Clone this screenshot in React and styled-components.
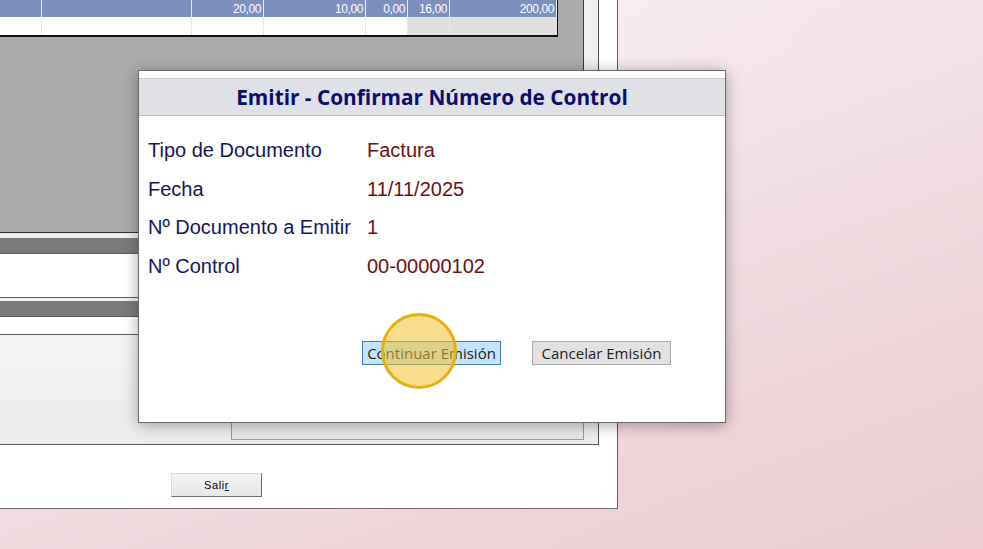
import React from 'react'
import styled, { createGlobalStyle } from 'styled-components'

const GlobalStyle = createGlobalStyle`
  html, body {
    margin: 0;
    padding: 0;
  }
  body {
    font-family: "Liberation Sans", Arial, sans-serif;
  }
`

const Desktop = styled.div`
  position: relative;
  width: 983px;
  height: 549px;
  overflow: hidden;
  background:
    radial-gradient(ellipse 900px 520px at 20% 0%, rgba(255, 255, 255, 0.55), rgba(255, 255, 255, 0) 70%),
    linear-gradient(160deg, #f8eff1 0%, #f3e2e6 45%, #eed5da 75%, #ebcdd3 100%);
`

const AppWindow = styled.div`
  box-sizing: border-box;
  width: 618px;
  height: 509px;
  background: #fff;
  border-right: 1px solid #5c5c5c;
  border-bottom: 1px solid #6a6a6a;
  padding-right: 18px;
  display: flex;
  flex-direction: column;
`

const MainPanel = styled.div`
  box-sizing: border-box;
  width: 599px;
  height: 445px;
  border-right: 1px solid #4a4a4a;
  border-bottom: 1px solid #555;
  display: flex;
  flex-direction: column;
`

const TopArea = styled.div`
  height: 232px;
  display: flex;
  border-bottom: 1px solid #2e2e2e;
`

const GrayArea = styled.div`
  width: 583px;
  background: #ababab;
`

const ScrollStrip = styled.div`
  flex: 1;
  background: #f0f0f0;
  border-left: 1px solid #3a3a3a;
`

const Grid = styled.div`
  display: grid;
  grid-template-columns: 42px 150px 72px 102px 42px 42px 107px;
  width: 558px;
  box-sizing: border-box;
  border-right: 1px solid #111;
  border-bottom: 2px solid #111;
`

const Cell = styled.div`
  box-sizing: border-box;
  height: ${p => (p.$head ? 17 : 18)}px;
  padding-right: 2px;
  text-align: right;
  font-family: "Liberation Sans Narrow", "Liberation Sans", Arial, sans-serif;
  font-size: 12px;
  line-height: 18px;
  letter-spacing: -0.4px;
  color: #fff;
  background: ${p => (p.$head ? '#7d8fbd' : p.$shade ? '#e0e0e0' : '#fff')};
  border-right: 1px solid ${p => (p.$head ? '#e9edf6' : '#e6e6e6')};
  &:last-child {
    border-right: none;
  }
`

const Lower = styled.div`
  flex: 1;
  display: flex;
  flex-direction: column;
  background: #f0f0f0;
  padding-top: 5px;
`

const Bar = styled.div`
  height: 15px;
  background: #7b7b7b;
  border-bottom: 1px solid #5a5a5a;
`

const WhiteBlock = styled.div`
  height: ${p => p.$h}px;
  background: #fff;
  border-bottom: 1px solid #5a5a5a;
  margin-bottom: ${p => p.$gap || 0}px;
`

const GroupArea = styled.div`
  flex: 1;
  display: flex;
  flex-direction: column;
  justify-content: flex-end;
  padding: 0 0 4px 231px;
  background: linear-gradient(180deg, #f4f4f4 0%, #ececec 100%);
`

const GroupBox = styled.div`
  box-sizing: border-box;
  width: 353px;
  height: 60px;
  border: 1px solid #9a9a9a;
  display: flex;
  justify-content: flex-end;
  padding: 22px 8px 0 0;
  font-size: 11px;
  color: #9c9c9c;
  background: linear-gradient(180deg, #f3f3f3 0%, #e6e6e6 100%);
`

const Footer = styled.div`
  padding: 28px 0 0 171px;
`

const SalirButton = styled.button`
  box-sizing: border-box;
  width: 91px;
  height: 24px;
  background: linear-gradient(180deg, #f5f5f5 0%, #e7e7e7 100%);
  border: 1px solid #d8d8d8;
  border-right-color: #6e6e6e;
  border-bottom-color: #6e6e6e;
  font-family: "Liberation Sans Narrow", "Liberation Sans", Arial, sans-serif;
  font-size: 11px;
  letter-spacing: 0.6px;
  color: #000;
  padding: 0;
  u {
    text-decoration: underline;
  }
`

const Dialog = styled.div`
  position: absolute;
  left: 138px;
  top: 70px;
  box-sizing: border-box;
  width: 588px;
  height: 353px;
  background: #fff;
  border: 1px solid #6b6b6b;
  box-shadow: 0 2px 14px rgba(0, 0, 0, 0.35);
  padding-top: 7px;
  display: flex;
  flex-direction: column;
`

const TitleBar = styled.div`
  height: 36px;
  background: #dfe1e7;
  border-top: 1px solid #c9ccd2;
  border-bottom: 1px solid #b7bac2;
  display: flex;
  align-items: center;
  justify-content: center;
  font-family: "Open Sans", "DejaVu Sans", sans-serif;
  font-weight: 700;
  font-size: 20.8px;
  color: #0c0c6b;
`

const Fields = styled.div`
  display: grid;
  grid-template-columns: 219px 1fr;
  grid-auto-rows: 38.7px;
  align-items: center;
  padding: 15px 0 0 9px;
  font-family: "Liberation Sans", Arial, sans-serif;
  font-size: 20px;
`

const Label = styled.div`
  color: #15155c;
`

const Value = styled.div`
  color: #6b1111;
`

const Actions = styled.div`
  display: flex;
  gap: 31px;
  padding: 55px 0 0 223px;
`

const DialogButton = styled.button`
  box-sizing: border-box;
  width: 139px;
  height: 24px;
  padding: 0;
  font-family: "Open Sans", "Noto Sans", sans-serif;
  font-size: 15px;
  line-height: 22px;
  color: #1b1b1b;
  background: ${p => (p.$primary ? '#c3e4fa' : '#e1e1e1')};
  border: 1px solid ${p => (p.$primary ? '#3d80b5' : '#a9a9a9')};
`

const ClickMark = styled.div`
  position: absolute;
  left: 381px;
  top: 313px;
  width: 76px;
  height: 76px;
  box-sizing: border-box;
  border-radius: 50%;
  border: 3px solid #e5b10c;
  background: rgba(240, 193, 45, 0.55);
  pointer-events: none;
`

const headValues = ['', '', '20,00', '10,00', '0,00', '16,00', '200,00']
const fields = [
  ['Tipo de Documento', 'Factura'],
  ['Fecha', '11/11/2025'],
  ['Nº Documento a Emitir', '1'],
  ['Nº Control', '00-00000102'],
]

export default function App() {
  return (
    <>
      <GlobalStyle />
      <Desktop>
        <AppWindow>
          <MainPanel>
            <TopArea>
              <GrayArea>
                <Grid>
                  {headValues.map((v, i) => (
                    <Cell key={'h' + i} $head>{v}</Cell>
                  ))}
                  {headValues.map((v, i) => (
                    <Cell key={'r' + i} $shade={i >= 5} />
                  ))}
                </Grid>
              </GrayArea>
              <ScrollStrip />
            </TopArea>
            <Lower>
              <Bar />
              <WhiteBlock $h={43} $gap={3} />
              <Bar />
              <WhiteBlock $h={17} />
              <GroupArea>
                <GroupBox>Ensayos</GroupBox>
              </GroupArea>
            </Lower>
          </MainPanel>
          <Footer>
            <SalirButton>Sali<u>r</u></SalirButton>
          </Footer>
        </AppWindow>

        <Dialog>
          <TitleBar>Emitir - Confirmar Número de Control</TitleBar>
          <Fields>
            {fields.map(([l, v]) => (
              <React.Fragment key={l}>
                <Label>{l}</Label>
                <Value>{v}</Value>
              </React.Fragment>
            ))}
          </Fields>
          <Actions>
            <DialogButton $primary>Continuar Emisión</DialogButton>
            <DialogButton>Cancelar Emisión</DialogButton>
          </Actions>
        </Dialog>

        <ClickMark />
      </Desktop>
    </>
  )
}
